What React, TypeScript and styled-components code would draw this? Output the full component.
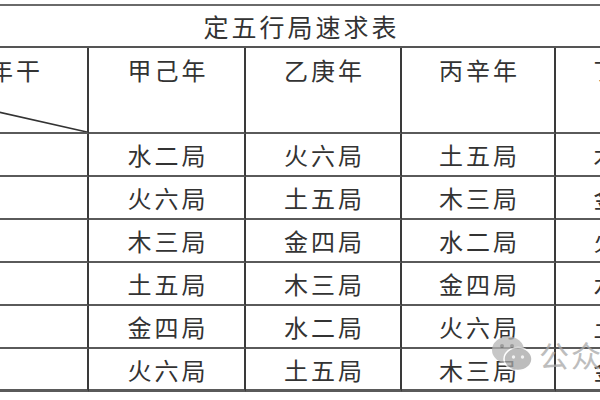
import React from "react"
import styled, { createGlobalStyle } from "styled-components"

const GlobalStyle = createGlobalStyle`
    html, body {
        margin: 0;
        padding: 0;
        background: #ffffff;
        overflow: hidden;
    }
    body {
        font-family: "Noto Sans CJK SC", "Noto Sans", sans-serif;
    }
`

const years = ["甲己年", "乙庚年", "丙辛年", "丁壬年", "戊癸年"]

const rows = [
    { label: "子丑", cells: ["水二局", "火六局", "土五局", "木三局", "金四局"] },
    { label: "寅卯", cells: ["火六局", "土五局", "木三局", "金四局", "水二局"] },
    { label: "辰巳", cells: ["木三局", "金四局", "水二局", "火六局", "土五局"] },
    { label: "午未", cells: ["土五局", "木三局", "金四局", "水二局", "火六局"] },
    { label: "申酉", cells: ["金四局", "水二局", "火六局", "土五局", "木三局"] },
    { label: "戌亥", cells: ["火六局", "土五局", "木三局", "金四局", "水二局"] },
]

export default function App() {
    return (
        <>
            <GlobalStyle />
            <Page>
                <TitleBar>定五行局速求表</TitleBar>
                <Table>
                    <CornerCell>
                        <CornerText>年干</CornerText>
                        <Diagonal viewBox="0 0 240 84" preserveAspectRatio="none">
                            <line x1="0" y1="30" x2="240" y2="84" stroke="#333" strokeWidth="1.6" />
                        </Diagonal>
                    </CornerCell>
                    {years.map((y) => (
                        <HeadCell key={y}>{y}</HeadCell>
                    ))}
                    {rows.map((r, i) => (
                        <React.Fragment key={r.label}>
                            <Cell $last={i === rows.length - 1}>{r.label}</Cell>
                            {r.cells.map((c, j) => (
                                <Cell key={j} $last={i === rows.length - 1}>{c}</Cell>
                            ))}
                        </React.Fragment>
                    ))}
                </Table>
                <Watermark>
                    <WeChatIcon width="42" height="38" viewBox="0 0 42 38">
                        <ellipse cx="17" cy="15" rx="16" ry="13.5" fill="#b5b5b5" />
                        <ellipse cx="27" cy="24" rx="14" ry="11.5" fill="#a6a6a6" stroke="#fff" strokeWidth="1.5" />
                        <circle cx="11" cy="11" r="2" fill="#7a7a7a" />
                        <circle cx="21" cy="11" r="2" fill="#7a7a7a" />
                        <circle cx="22.5" cy="22" r="1.7" fill="#eee" />
                        <circle cx="31.5" cy="22" r="1.7" fill="#eee" />
                    </WeChatIcon>
                    <WatermarkText>公众号</WatermarkText>
                </Watermark>
            </Page>
        </>
    )
}

const Page = styled.div`
    position: relative;
    width: 600px;
    height: 400px;
    overflow: hidden;
    padding-top: 4px;
    box-sizing: border-box;
    color: #333;
`

const TitleBar = styled.div`
    height: 40px;
    border-top: 2px solid #6a6a6a;
    border-bottom: 2px solid #555;
    display: flex;
    align-items: center;
    justify-content: center;
    font-size: 25px;
    letter-spacing: 3px;
    text-indent: 3px;
    color: #333;
`

const Table = styled.div`
    display: grid;
    grid-template-columns: 241px 157px 156px 154px 155px 155px;
    grid-template-rows: 86px repeat(6, 43px);
    margin-left: -152px;
    width: max-content;
`

const CellBase = styled.div`
    box-sizing: border-box;
    border-right: 2px solid #3a3a3a;
    border-bottom: 2px solid #5a5a5a;
    font-size: 24px;
    letter-spacing: 3px;
    text-indent: 3px;
    color: #333;
    white-space: nowrap;
`

const HeadCell = styled(CellBase)`
    text-align: center;
    padding-top: 6px;
    line-height: 32px;
`

const CornerCell = styled(CellBase)`
    position: relative;
    padding-top: 6px;
    line-height: 32px;
    text-align: right;
    padding-right: 44px;
`

const CornerText = styled.span``

const Diagonal = styled.svg`
    position: absolute;
    left: 0;
    top: 0;
    width: 100%;
    height: 84px;
`

const Cell = styled(CellBase)<{ $last?: boolean }>`
    display: flex;
    align-items: center;
    justify-content: center;
    border-bottom-width: ${(p) => (p.$last ? "3px" : "2px")};
`

const Watermark = styled.div`
    position: absolute;
    left: 491px;
    top: 332px;
    display: flex;
    align-items: center;
    gap: 6px;
    width: max-content;
    white-space: nowrap;
    opacity: 0.75;
`

const WeChatIcon = styled.svg`
    flex-shrink: 0;
`

const WatermarkText = styled.span`
    font-size: 30px;
    color: #a8a8a8;
    letter-spacing: 2px;
`
